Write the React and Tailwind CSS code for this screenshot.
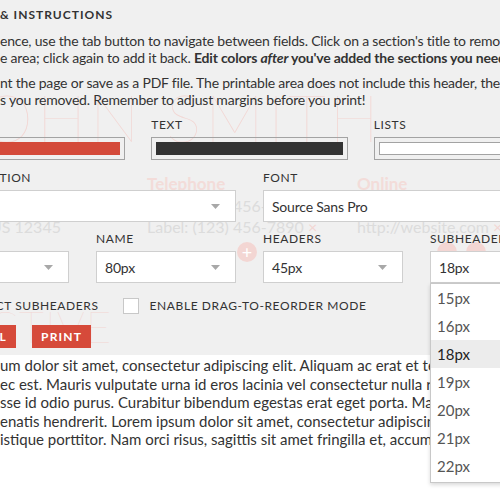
import React from "react";

const label = "text-[12px] leading-4 tracking-[0.6px] text-[#333] uppercase";

function Chevron() {
  return (
    <svg width="9" height="5" viewBox="0 0 9 5" className="shrink-0">
      <path d="M0 0 L9 0 L4.5 5 Z" fill="#a8a8a8" />
    </svg>
  );
}

function Select({ value }) {
  return (
    <div className="flex h-[32px] items-center justify-between border border-[#cfcfcf] bg-white pl-[8px] pr-[15px] text-[14px] tracking-[-0.2px] text-[#333]">
      <span className="whitespace-nowrap">{value}</span>
      <Chevron />
    </div>
  );
}

function Swatch({ color, inner }) {
  return (
    <div className="h-[23px] border border-[#a3a3a3] p-[4px]">
      <div className={`h-full ${inner}`} style={color ? { background: color } : undefined} />
    </div>
  );
}

export default function App() {
  const sizes = ["15px", "16px", "18px", "19px", "20px", "21px", "22px"];
  return (
    <div className="relative h-[500px] w-[500px] overflow-hidden bg-white font-['Lato','Noto_Sans',sans-serif] text-[#333]">
      {/* header panel */}
      <div className="relative h-[355px] bg-[#f0f0f0]">
        {/* resume showing through the panel */}
        <div className="pointer-events-none absolute inset-0 select-none">
          <div className="absolute left-[-50px] top-[84px] whitespace-nowrap text-[66px] font-thin leading-none tracking-[4px] text-[#f2d6d3]">
            JOHN SMITH
          </div>
          <div className="absolute left-[147px] top-[171px] text-[17px] font-bold text-[#f3dcd9]">Telephone</div>
          <div className="absolute left-[357px] top-[171px] text-[17px] font-bold text-[#f3dcd9]">Online</div>
          <div className="absolute left-[147px] top-[194px] whitespace-nowrap text-[16px] text-[#dcdcdc]">
            Label: (123) 456-7890 <span className="text-[#f3d6d3]">×</span>
          </div>
          <div className="absolute left-[147px] top-[215px] whitespace-nowrap text-[16px] text-[#dcdcdc]">
            Label: (123) 456-7890 <span className="text-[#f3d6d3]">×</span>
          </div>
          <div className="absolute left-[357px] top-[215px] whitespace-nowrap text-[16px] text-[#dcdcdc]">
            http://website.com <span className="text-[#f3d6d3]">×</span>
          </div>
          <div className="absolute left-[-10px] top-[215px] whitespace-nowrap text-[16px] text-[#dcdcdc]">
            US 12345
          </div>
          <div className="absolute left-[237px] top-[242px] flex h-[20px] w-[20px] items-center justify-center rounded-full bg-[#f3d6d3] text-[18px] leading-none text-white">
            +
          </div>
          <div className="absolute left-[437px] top-[242px] h-[20px] w-[20px] rounded-full bg-[#f3d6d3]" />
          <div className="absolute left-[466px] top-[242px] h-[20px] w-[20px] rounded-full bg-[#f3d6d3]" />
          <div className="absolute left-[-120px] top-[304px] whitespace-nowrap text-[44px] font-thin leading-none tracking-[1px] text-[#f2d6d3]">
            OBJECTIVE
          </div>
        </div>

        <div className="relative">
          <div className="whitespace-nowrap pt-[7px] text-[12px] font-bold leading-4 tracking-[1px] text-[#333]">
            &amp; INSTRUCTIONS
          </div>
          <p className="mt-[9px] whitespace-nowrap text-[14px] leading-[17px] tracking-[-0.2px]">
            ence, use the tab button to navigate between fields. Click on a section's title to remove it from the
            <br />
            e area; click again to add it back.{" "}
            <b>
              Edit colors <i>after</i> you've added the sections you need.
            </b>
          </p>
          <p className="mt-[8px] whitespace-nowrap text-[14px] leading-[17px] tracking-[-0.2px]">
            nt the page or save as a PDF file. The printable area does not include this header, the lines
            <br />
            s you removed. Remember to adjust margins before you print!
          </p>

          <div className="ml-[-71px] w-[641px]">
            <div className="mt-[9px] grid grid-cols-3 gap-x-[26px]">
              <div>
                <div className={label}>Accent</div>
                <div className="mt-[4px]">
                  <Swatch color="#d44a3a" inner="" />
                </div>
              </div>
              <div>
                <div className={label}>Text</div>
                <div className="mt-[4px]">
                  <Swatch color="#333333" inner="" />
                </div>
              </div>
              <div>
                <div className={label}>Lists</div>
                <div className="mt-[4px]">
                  <Swatch inner="border border-[#a3a3a3] bg-white" />
                </div>
              </div>
            </div>

            <div className="mt-[10px] grid grid-cols-2 gap-x-[27px]">
              <div>
                <div className={label}>Name position</div>
                <div className="mt-[4px]">
                  <Select value="Center" />
                </div>
              </div>
              <div>
                <div className={label}>Font</div>
                <div className="mt-[4px]">
                  <Select value="Source Sans Pro" />
                </div>
              </div>
            </div>

            <div className="mt-[9px] grid grid-cols-4 gap-x-[27px]">
              <div>
                <div className={label}>Body</div>
                <div className="mt-[4px]">
                  <Select value="14px" />
                </div>
              </div>
              <div>
                <div className={label}>Name</div>
                <div className="mt-[4px]">
                  <Select value="80px" />
                </div>
              </div>
              <div>
                <div className={label}>Headers</div>
                <div className="mt-[4px]">
                  <Select value="45px" />
                </div>
              </div>
              <div>
                <div className={label}>Subheaders</div>
                <div className="mt-[4px]">
                  <Select value="18px" />
                </div>
              </div>
            </div>

            <div className="mt-[15px] flex items-center gap-[24px]">
              <div className="flex items-center gap-[11px]">
                <div className="h-[16px] w-[16px] border border-[#c8c8c8] bg-white" />
                <span className={`${label} whitespace-nowrap`}>Collect subheaders</span>
              </div>
              <div className="flex items-center gap-[11px]">
                <div className="h-[16px] w-[16px] border border-[#c8c8c8] bg-white" />
                <span className={`${label} whitespace-nowrap`}>Enable drag-to-reorder mode</span>
              </div>
            </div>

            <div className="mt-[11px] flex gap-[16px]">
              <button className="h-[23px] bg-[#d64a3a] px-[9px] text-[12px] font-bold tracking-[1.2px] text-white">
                RESET ALL
              </button>
              <button className="h-[23px] bg-[#d64a3a] px-[9px] text-[12px] font-bold tracking-[1.2px] text-white">
                PRINT
              </button>
            </div>
          </div>
        </div>
      </div>

      {/* resume body */}
      <div className="whitespace-nowrap pt-[1px] text-[15px] leading-[18.5px] text-[#333]">
        <div>um dolor sit amet, consectetur adipiscing elit. Aliquam ac erat et tellus</div>
        <div>ec est. Mauris vulputate urna id eros lacinia vel consectetur nulla rhoncus</div>
        <div>sse id odio purus. Curabitur bibendum egestas erat eget porta. Maecenas</div>
        <div>enatis hendrerit. Lorem ipsum dolor sit amet, consectetur adipiscing elit</div>
        <div>istique porttitor. Nam orci risus, sagittis sit amet fringilla et, accumsan</div>
      </div>

      {/* open subheader dropdown */}
      <div className="absolute left-[430px] top-[283px] w-[150px] border border-[#c8c8c8] bg-white pb-[2px] shadow-[0_2px_4px_rgba(0,0,0,0.15)]">
        {sizes.map((s) => (
          <div
            key={s}
            className={`flex h-[28px] items-center pl-[6px] text-[15px] ${
              s === "18px" ? "bg-[#ececec] text-[#222]" : "text-[#555]"
            }`}
          >
            {s}
          </div>
        ))}
      </div>
    </div>
  );
}
